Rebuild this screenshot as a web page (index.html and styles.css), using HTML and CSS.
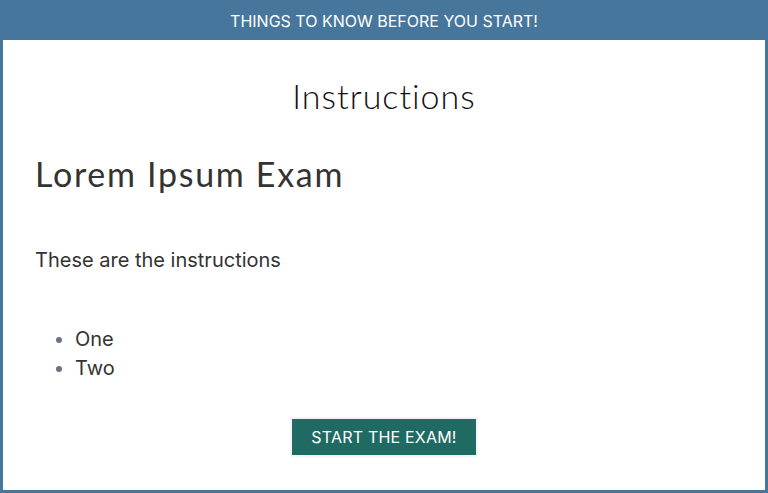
FILE: index.html
```html
<!DOCTYPE html>
<html>
<head>
<meta charset="utf-8">
<link rel="stylesheet" href="styles.css">
</head>
<body>
<div class="frame">
  <header class="bar">THINGS TO KNOW BEFORE YOU START!</header>
  <main class="content">
    <h1 class="title">Instructions</h1>
    <h2 class="exam">Lorem Ipsum Exam</h2>
    <p class="intro">These are the instructions</p>
    <ul class="list">
      <li>One</li>
      <li>Two</li>
    </ul>
    <div class="actions">
      <button class="start">START THE EXAM!</button>
    </div>
  </main>
</div>
</body>
</html>
```
FILE: styles.css
```css
html, body {
  margin: 0;
  padding: 0;
  height: 100%;
}
body {
  font-family: Inter, "Noto Sans", sans-serif;
  color: #333;
  background: #fff;
}
.frame {
  box-sizing: border-box;
  height: 493px;
  border: 3px solid #46769c;
  border-top: 0;
  display: flex;
  flex-direction: column;
}
.bar {
  background: #46769c;
  color: #fff;
  height: 40px;
  margin: 0 -3px;
  display: flex;
  align-items: center;
  justify-content: center;
  font-size: 16px;
  font-weight: 400;
  padding-top: 1px;
  box-sizing: border-box;
}
.content {
  padding: 0 32px;
}
.title {
  margin: 36px 0 0;
  text-align: center;
  font-family: Lato, sans-serif;
  font-weight: 300;
  font-size: 34px;
  line-height: 40px;
  letter-spacing: 1px;
  color: #111;
}
.exam {
  margin: 38px 0 0;
  font-family: Lato, sans-serif;
  font-weight: 400;
  font-size: 34px;
  line-height: 40px;
  letter-spacing: 1.7px;
  color: #333;
}
.intro {
  margin: 52px 0 0;
  font-size: 20px;
  line-height: 28px;
  color: #333;
}
.list {
  margin: 51px 0 0;
  padding-left: 40px;
  font-size: 20px;
  line-height: 29px;
  color: #333;
}
.list li::marker {
  color: #6b7280;
}
.actions {
  display: flex;
  justify-content: center;
  margin-top: 34px;
}
.start {
  box-sizing: border-box;
  background: #1f6b63;
  color: #fff;
  border: 2px solid #f3f4f6;
  font-family: Inter, sans-serif;
  font-size: 16px;
  letter-spacing: 0.2px;
  padding: 0;
  height: 40px;
  width: 188px;
}
```
